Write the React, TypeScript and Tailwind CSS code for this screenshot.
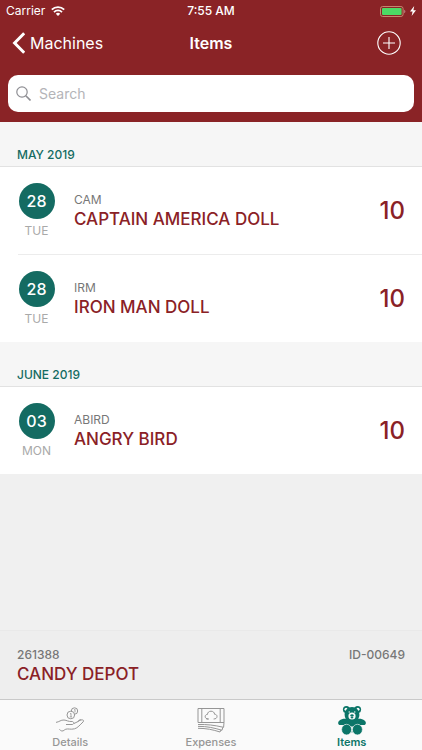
/** Items — items stocked in one machine, grouped by month, with the machine footer and tab bar. */

import { Fragment, useState, type ReactNode } from 'react'

interface Item {
  day: string
  weekday: string
  code: string
  name: string
  count: number
}

const SECTIONS: { title: string; items: Item[] }[] = [
  {
    title: 'MAY 2019',
    items: [
      { day: '28', weekday: 'TUE', code: 'CAM', name: 'CAPTAIN AMERICA DOLL', count: 10 },
      { day: '28', weekday: 'TUE', code: 'IRM', name: 'IRON MAN DOLL', count: 10 },
    ],
  },
  {
    title: 'JUNE 2019',
    items: [{ day: '03', weekday: 'MON', code: 'ABIRD', name: 'ANGRY BIRD', count: 10 }],
  },
]

function StatusBar() {
  return (
    <div className="grid h-[22px] grid-cols-3 items-center px-[6px] text-xs">
      <div className="flex items-center gap-1.5">
        <span>Carrier</span>
        <svg viewBox="0 0 14 10" className="h-[10px] w-[14px]" aria-hidden="true">
          <g fill="none" stroke="currentColor" strokeWidth="1.8">
            <path d="M.8 3.6a8.8 8.8 0 0 1 12.4 0" />
            <path d="M3 6.1a5.7 5.7 0 0 1 8 0" />
          </g>
          <path d="M7 10 4.8 7.8a3.1 3.1 0 0 1 4.4 0Z" fill="currentColor" />
        </svg>
      </div>
      <span className="text-center font-medium">7:55 AM</span>
      <div className="flex items-center justify-end gap-1">
        <svg viewBox="0 0 26 11" className="h-[11px] w-[26px]" aria-hidden="true">
          <rect x=".5" y=".5" width="22.6" height="10" rx="2.2" fill="none" stroke="#c4866f" />
          <rect x="2" y="2" width="19.6" height="7" rx="1" fill="#4cd964" />
          <path d="M24.3 3.8c1.4.4 1.4 3 0 3.4Z" fill="#c99293" />
        </svg>
        <svg viewBox="0 0 6 10" className="h-[10px] w-[6px]" fill="currentColor" aria-hidden="true">
          <path d="M4.2 0 0 5.6h2.6L1.6 10 6 4.2H3.4Z" />
        </svg>
      </div>
    </div>
  )
}

function NavBar() {
  return (
    <nav className="grid h-[42px] grid-cols-3 items-center px-3">
      <a href="#machines" className="flex items-center gap-[5px] text-base">
        <svg
          viewBox="0 0 13 22"
          className="h-[22px] w-[13px] shrink-0"
          fill="none"
          stroke="currentColor"
          strokeWidth="3"
          aria-hidden="true"
        >
          <path d="M12.2 1.2 2.6 11l9.6 9.8" />
        </svg>
        Machines
      </a>
      <h1 className="text-center text-base font-semibold">Items</h1>
      <button type="button" aria-label="Add item" className="justify-self-end px-[9px]">
        <svg viewBox="0 0 24 24" className="size-6" fill="none" stroke="currentColor" strokeWidth="1.1">
          <circle cx="12" cy="12" r="11.2" />
          <path d="M12 6v12M6 12h12" />
        </svg>
      </button>
    </nav>
  )
}

function SearchBox() {
  const [query, setQuery] = useState('')

  return (
    <div className="px-2 pb-[10px] pt-[11px]">
      <label className="flex h-[37px] items-center gap-2 rounded-[10px] bg-white px-2">
        <svg
          viewBox="0 0 15 15"
          className="size-[15px] shrink-0 text-[#8e8e93]"
          fill="none"
          stroke="currentColor"
          strokeWidth="1.2"
          aria-hidden="true"
        >
          <circle cx="6" cy="6" r="5.2" />
          <path d="m9.8 9.8 4.7 4.7" strokeWidth="1.6" />
        </svg>
        <input
          type="search"
          aria-label="Search"
          placeholder="Search"
          value={query}
          onChange={(e) => setQuery(e.target.value)}
          className="min-w-0 flex-1 bg-transparent text-sm text-gray-700 placeholder:text-[#b4b4b8] focus:outline-none"
        />
      </label>
    </div>
  )
}

function ItemRow({ item }: { item: Item }) {
  return (
    <li className="ml-[18px] flex h-[87px] items-center">
      <div className="flex w-[37px] flex-col items-center gap-1">
        <span className="flex size-9 items-center justify-center rounded-full bg-[#146b62] text-base font-medium text-white">
          {item.day}
        </span>
        <span className="text-xs text-[#a9a9a9]">{item.weekday}</span>
      </div>
      <div className="ml-[19px] flex flex-1 items-center justify-between pr-[17px]">
        <div>
          <div className="text-xs leading-4 text-[#777777]">{item.code}</div>
          <div className="text-[17px] font-medium leading-[22px] text-[#8a2126]">{item.name}</div>
        </div>
        <span className="text-2xl font-medium text-[#8a2126]">{item.count}</span>
      </div>
    </li>
  )
}

function HandIcon() {
  return (
    <svg viewBox="0 0 30 26" className="h-[26px] w-[30px]" fill="none" stroke="currentColor" strokeWidth="1">
      <circle cx="19.5" cy="4" r="3.2" />
      <circle cx="15.8" cy="8" r="3.8" fill="#fafafa" />
      <path d="M19.2 2.9l.8-.6v3M15 7l1-.7v3.6M14.8 9.9h2.2" strokeWidth=".8" />
      <path d="M1 15.4c3.4-.5 4.7-2.6 8-2.4 3 .2 4 1.8 8.2 1.5 1.7 0 2.2 2.5.2 3H11" />
      <path d="M18.8 16.6c2.4-.8 4-2.2 6.4-3.4 2.6-1 4.4.2 2.8 1.8-3 2.8-5.2 5.9-8.4 6.8-4.4 1-6.3-.4-8.8.4-1.6.5-2 2-4 1.8-1-.2-1.6-1-2.4-1.6" />
      <path d="m22.8 14.5 2-1.7 1.4.1" />
    </svg>
  )
}

function BanknotesIcon() {
  return (
    <svg viewBox="0 0 30 26" className="h-[26px] w-[30px]" fill="none" stroke="currentColor" strokeWidth="1">
      <path d="M2 1.5h26v14H2ZM5.8 1.5v14M24.2 1.5v14" />
      <path d="M12.6 12h-2.2M12.6 12c-2.4 0-3.6-1.2-3.4-2.8.2-1.3 1.2-1.8 2.2-1.7.2-2.2 1.6-3.3 3.6-3.3s3.4 1.1 3.6 3.1c1.4 0 2.5.8 2.4 2.2 0 1.5-1.2 2.5-3.4 2.5" />
      <path d="M2 17.5c9-.2 16 .6 25.6 2.8l.4-4.8M2 19.4c9-.2 16 1.5 24 3.9l.8-3M2 21.3c8.4 0 15 1.4 22 3.7l1-2.2" />
    </svg>
  )
}

function BearIcon() {
  return (
    <svg viewBox="0 0 28 29" className="h-[29px] w-7" fill="currentColor">
      <circle cx="8.4" cy="3.6" r="3.5" />
      <circle cx="19.6" cy="3.6" r="3.5" />
      <circle cx="8.1" cy="3.3" r="1.6" fill="#fafafa" />
      <circle cx="19.9" cy="3.3" r="1.6" fill="#fafafa" />
      <path d="M14 1c4.4 0 7.4 3.5 7.4 7.8 0 1.5-.5 2.9-1.2 4 2.4-.2 4.4.2 6.6 2 1.8 1.5 1.3 4.3-1.2 4.3-2 .1-3.9-.3-5.6-.7l-1 2H9l-1-2c-1.7.4-3.6.8-5.6.7-2.5 0-3-2.8-1.2-4.3 2.2-1.8 4.2-2.2 6.6-2a7.6 7.6 0 0 1-1.2-4C6.6 4.500 9.600 1 14 1Z" />
      <circle cx="14" cy="10" r="3.6" fill="#fafafa" />
      <ellipse cx="14" cy="9.4" rx="1.7" ry="1.2" />
      <path d="M12.4 11.8c1 .8 2.2.8 3.2 0L14 10.2Z" />
      <circle cx="11.2" cy="6" r=".7" fill="#fafafa" />
      <circle cx="16.8" cy="6" r=".7" fill="#fafafa" />
      <g stroke="#fafafa" strokeWidth=".6">
        <ellipse cx="8.6" cy="23.6" rx="5" ry="5.3" />
        <ellipse cx="19.4" cy="23.6" rx="5" ry="5.3" />
      </g>
      <circle cx="14" cy="26" r=".5" />
    </svg>
  )
}

function Tab({ label, active = false, children }: { label: string; active?: boolean; children: ReactNode }) {
  return (
    <button
      type="button"
      aria-current={active ? 'page' : undefined}
      className={`flex flex-col items-center gap-px text-[11px] leading-3 ${
        active ? 'font-semibold text-[#0b7568]' : 'font-medium text-[#969696]'
      }`}
    >
      <span className="flex h-[30px] items-center" aria-hidden="true">
        {children}
      </span>
      {label}
    </button>
  )
}

export default function App() {
  return (
    <div className="flex min-h-screen flex-col bg-[#f0f0f0] font-['Inter',sans-serif]">
      <header className="bg-[#8a2326] text-white">
        <StatusBar />
        <NavBar />
        <SearchBox />
      </header>

      <main className="flex-1">
        {SECTIONS.map((section) => (
          <section key={section.title}>
            <h2 className="flex h-[45px] items-end border-b border-[#e2e2e2] bg-[#f6f6f6] px-[17px] pb-[3px] text-xs font-medium leading-4 text-[#146b62]">
              {section.title}
            </h2>
            <ul className="bg-white">
              {section.items.map((item, i) => (
                <Fragment key={item.code}>
                  {i > 0 && <li role="separator" className="ml-[18px] h-px bg-[#ececec]" />}
                  <ItemRow item={item} />
                </Fragment>
              ))}
            </ul>
          </section>
        ))}
      </main>

      <footer>
        <div className="flex items-start justify-between border-t border-[#e9e9e9] bg-[#eeeeee] px-[17px] pb-[14px] pt-4">
          <div>
            <div className="text-xs font-medium leading-4 text-[#777777]">261388</div>
            <div className="text-[17px] font-medium leading-[22px] text-[#8a2126]">CANDY DEPOT</div>
          </div>
          <div className="text-xs font-medium leading-4 text-[#777777]">ID-00649</div>
        </div>
        <nav className="grid grid-cols-3 border-t border-[#c9c9c9] bg-[#fafafa] pb-0.5 pt-[5px]">
          <Tab label="Details">
            <HandIcon />
          </Tab>
          <Tab label="Expenses">
            <BanknotesIcon />
          </Tab>
          <Tab label="Items" active>
            <BearIcon />
          </Tab>
        </nav>
      </footer>
    </div>
  )
}
